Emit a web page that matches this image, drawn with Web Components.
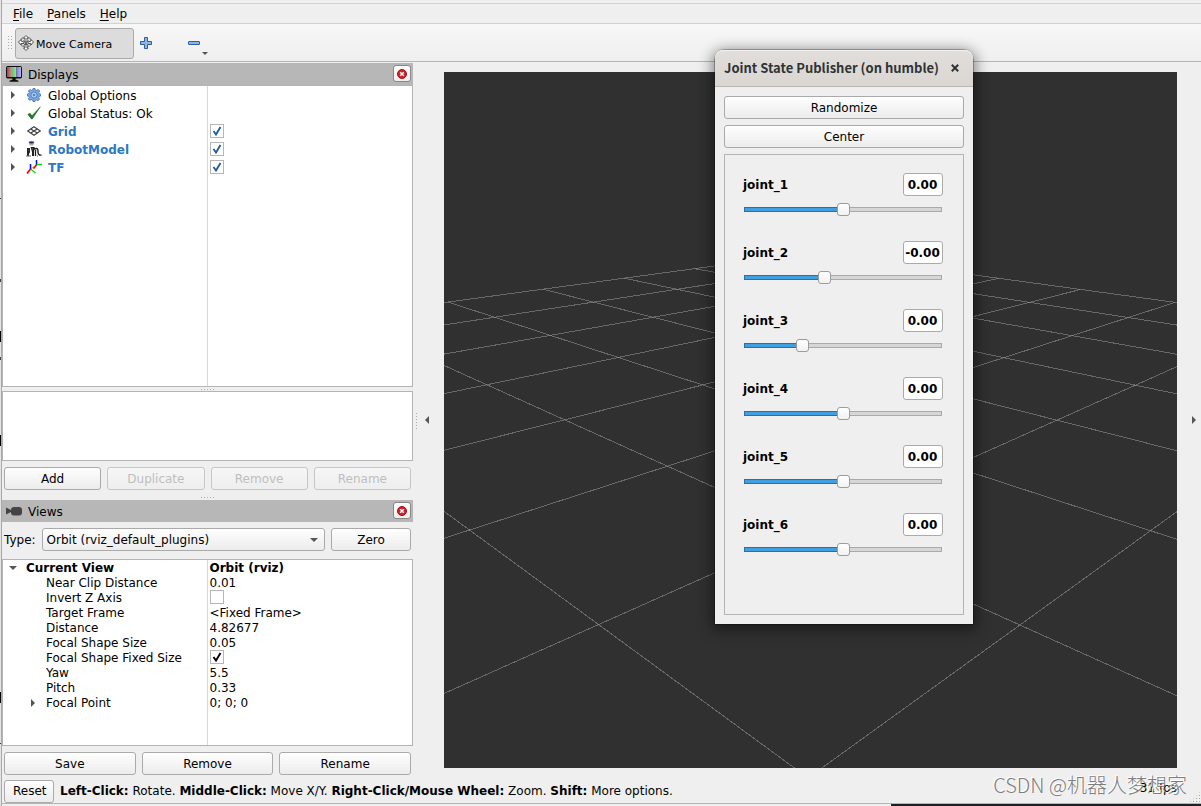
<!DOCTYPE html>
<html lang="en">
<head>
<meta charset="utf-8">
<title>RViz</title>
<style>
  html, body { margin: 0; height: 100%; }
  body { background: #efefef; font: 12px/15px "DejaVu Sans", sans-serif; color: #000; }
</style>
</head>
<body>
<rv-app></rv-app>
<script>
const BASE = `
  :host, *, *::before, *::after { box-sizing: border-box; }
  button, input, select { font: inherit; color: inherit; margin: 0; }
  svg { display: block; }
`;

function define(name, css, html, setup) {
  const template = document.createElement('template');
  template.innerHTML = `<style>${BASE}${css}</style>${html}`;
  customElements.define(name, class extends HTMLElement {
    constructor() {
      super();
      this.attachShadow({ mode: 'open' }).append(template.content.cloneNode(true));
    }
    connectedCallback() {
      if (setup && !this.ready) { this.ready = true; setup(this, this.shadowRoot); }
    }
  });
}

/* ---------- icons ---------- */
const ICONS = {
  move: [16, 16, `<g fill="#fff" stroke="#555" stroke-linejoin="round">
    <path d="M2.500 5.500 4 3h8l1.500 2.500-1 5L8 13l-4.500-2.500z" fill="none" stroke="#777"/>
    <path d="M8 .5 10.500 3H9v4h-2V3H5.500zM8 15.500 5.500 13H7V9.500h2V13h1.500zM.5 7 3 4.500V6l3 1v1.500L3 8.500V10zM15.500 7 13 4.500V6l-3 1v1.500l3 0V10z"/></g>
    <path d="M5.500 5.500l5 5M10.500 5.500l-5 5" stroke="#666"/>`],
  plus: [12, 12, `<path d="M4.500.5h3v4h4v3h-4v4h-3v-4h-4v-3h4z" fill="#8fb4dd" stroke="#2c5f9e"/>`],
  minus: [12, 4, `<rect x=".5" y=".5" width="11" height="3" rx=".5" fill="#8fb4dd" stroke="#2c5f9e"/>`],
  monitor: [16, 16, `<defs>
    <linearGradient id="r"><stop stop-color="#a4444b"/><stop offset="1" stop-color="#cf9a9c"/></linearGradient>
    <linearGradient id="g"><stop stop-color="#66c262"/><stop offset="1" stop-color="#a9dfa5"/></linearGradient>
    <linearGradient id="b"><stop stop-color="#8078dc"/><stop offset="1" stop-color="#bcb8f4"/></linearGradient></defs>
    <rect x=".5" y=".5" width="15" height="11.500" rx="1" fill="#111" stroke="#111"/>
    <rect x="1" y="1" width="5" height="10" fill="url(#r)"/><rect x="6" y="1" width="4.500" height="10" fill="url(#g)"/><rect x="10.500" y="1" width="4.500" height="10" fill="url(#b)"/>
    <path d="M6.500 12h3v1.500l3 1.300v.9h-9v-.9l3-1.300z" fill="#111"/>`],
  camera: [16, 10, `<path d="M0 1.500 5 4v2L0 8.500z" fill="#444"/><rect x="5" y="1" width="11" height="8.500" rx="3" fill="#444"/>`],
  gear: [14, 14, `<g fill="#7fa7dc" stroke="#3a6db3" stroke-width=".8"><path d="M6 .5h2l.4 1.500 1.400.5L11.200 1.500l1.500 1.500-.9 1.400.5 1.300 1.300.4v2l-1.400.4-.5 1.400.9 1.300-1.500 1.500-1.300-.9-1.400.5L8 13.500H6l-.4-1.500-1.400-.5-1.400.9-1.500-1.500.9-1.300-.5-1.400L.4 8V6l1.400-.4.5-1.300L1.400 3l1.500-1.500 1.300.9L5.600 2z"/></g>
    <circle cx="7" cy="7" r="3.200" fill="#a9c6ea" stroke="#4f82c6"/><circle cx="7" cy="7" r="1" fill="#3a6db3"/>`],
  ok: [14, 14, `<path d="M.8 8.400 3 7.200l2 2.600L13.300.8 5.300 13H4.500z" fill="#1c7d22" stroke="#146018" stroke-width=".5"/>`],
  grid: [14, 10, `<g fill="none" stroke="#444" stroke-width="1.200"><path d="M7 .7 13.300 5 7 9.300.7 5z"/><path d="M3.800 2.900 10.200 7.100M10.200 2.900 3.800 7.100"/></g>`],
  robot: [16, 16, `<ellipse cx="5.500" cy="1.500" rx="2.800" ry="1.300" fill="#24356b"/><path d="M3.500 3h4v1.500h-4z" fill="#aaa"/>
    <path d="M1 7h3v4.500l-1 1V15H1zM4.500 6h4l1 2.500-1.500.5V15H6v-4z" fill="#222"/><path d="M9 8c3-1.500 3 1 3 3s1 3.500 3.500 3M9.500 9v6" fill="none" stroke="#222" stroke-width="1.400"/><path d="M0 15h5M2 9h1M6 8h1M11 15h1" stroke="#666"/>`],
  tf: [16, 14, `<path d="M4.500 9 10.500 5" stroke="#ec0" stroke-width="1.400"/>
    <path d="M10.500 5V0M4.500 9V4" stroke="#00f" stroke-width="1.500"/><path d="M10.500 4.500H16M4.500 9l5 4" stroke="#0d0" stroke-width="1.300"/><path d="M10.500 5 7.500 8.500M4.500 9 1 13.500" stroke="#f00" stroke-width="1.700"/>`],
  close: [10, 10, `<circle cx="5" cy="5" r="4.500" fill="#d32026" stroke="#a01217"/><path d="M3.200 3.200l3.600 3.600M6.800 3.200 3.200 6.800" stroke="#fff" stroke-width="1.500"/>`],
  x: [8, 8, `<path d="M.8.8l6.400 6.400M7.200.8.8 7.200" stroke="#2e3436" stroke-width="2"/>`],
  right: [4, 8, `<path d="M0 0 4 4 0 8z" fill="#555"/>`],
  left: [4, 8, `<path d="M4 0 0 4 4 8z" fill="#555"/>`],
  down: [8, 4, `<path d="M0 0H8L4 4z" fill="#555"/>`],
  downsmall: [6, 3, `<path d="M0 0H6L3 3z" fill="#555"/>`],
};
const icon = n => {
  const [w, h, body] = ICONS[n];
  return `<svg width="${w}" height="${h}" viewBox="0 0 ${w} ${h}" aria-hidden="true">${body}</svg>`;
};

define('rv-icon', `:host { display: inline-flex; }`, ``,
  (host, root) => root.append(document.createRange().createContextualFragment(icon(host.getAttribute('name')))));

/* ---------- button ---------- */
define('rv-button', `
  :host { display: block; min-width: 0; }
  button { display: block; width: 100%; height: 23px; padding: 1px 8px 0; border: 1px solid #aaa; border-radius: 3px;
    background: linear-gradient(#fefefe, #ececec); line-height: 15px; }
  button:disabled { color: #bebebe; border-color: #c6c6c6; background: linear-gradient(#f6f6f6, #eee); }
`, `<button type="button"><slot></slot></button>`,
  (host, root) => { root.querySelector('button').disabled = host.hasAttribute('disabled'); });

/* ---------- dotted drag handle ---------- */
define('rv-handle', `
  :host { display: block; width: 16px; height: 2px; background: radial-gradient(circle, #aaa 1px, transparent 1px) 0 0 / 3px 3px; }
  :host([vertical]) { width: 2px; height: 17px; }
  :host([wide]) { width: 5px; height: 16px; }
  :host([corner]) { width: 12px; height: 12px; clip-path: polygon(100% 0, 100% 100%, 0 100%); }
`, ``);

/* ---------- menu bar ---------- */
define('rv-menu-bar', `
  :host { display: flex; flex: none; height: 21px; padding: 1px 0 0 5px; border-top: 1px solid #d4d4d4; border-bottom: 1px solid #d2d2d2; background: #efefef; }
  button { border: 0; background: none; padding: 0 6px; }
  button + button { margin-left: 2px; }
  u { text-underline-offset: 2px; }
`, `<button type="button"><u>F</u>ile</button><button type="button"><u>P</u>anels</button><button type="button"><u>H</u>elp</button>`);

/* ---------- tool bar ---------- */
define('rv-tool-bar', `
  :host { display: flex; flex: none; align-items: center; height: 38px; padding: 1px 0 0 5px; background: linear-gradient(#f7f7f7, #efefef); border-bottom: 1px solid #b4b4b4; }
  button { display: flex; align-items: center; border: 0; background: none; padding: 0; }
  .camera { width: 119px; height: 31px; margin-left: 3px; padding: 0 2px; gap: 2px; font-size: 11px; border: 1px solid #aaa; border-radius: 3px; background: #dcdcdc; }
  .camera span { padding-top: 2px; }
  .add { margin-left: 6px; }
  .remove { position: relative; margin-left: 36px; height: 30px; }
  .remove rv-icon + rv-icon { position: absolute; left: 14px; bottom: 3px; }
`, `<rv-handle wide></rv-handle>
  <button type="button" class="camera"><rv-icon name="move"></rv-icon><span>Move Camera</span></button>
  <button type="button" class="add" aria-label="Add tool"><rv-icon name="plus"></rv-icon></button>
  <button type="button" class="remove" aria-label="Remove tool"><rv-icon name="minus"></rv-icon><rv-icon name="downsmall"></rv-icon></button>`);

/* ---------- docked panel ---------- */
define('rv-panel', `
  :host { display: flex; flex-direction: column; }
  header { display: flex; align-items: center; flex: none; height: 22px; padding: 0 2px 0 4px; gap: 6px; background: #b7b7b7; }
  h2 { flex: 1; margin: 0; font: inherit; padding-top: 2px; }
  button { display: flex; align-items: center; justify-content: center; width: 18px; height: 17px; margin-bottom: 1px; padding: 0;
    border: 1px solid #888; border-radius: 3px; background: linear-gradient(#fff, #eee); }
`, `<header><span class="icon"></span><h2></h2><button type="button" aria-label="Close"><rv-icon name="close"></rv-icon></button></header><slot></slot>`,
  (host, root) => {
    root.querySelector('h2').textContent = host.getAttribute('heading');
    root.querySelector('.icon').innerHTML = icon(host.getAttribute('icon'));
  });

/* ---------- property tree ---------- */
const TREES = {
  displays: [
    { name: 'Global Options', icon: 'gear', arrow: 'right' },
    { name: 'Global Status: Ok', icon: 'ok', arrow: 'right' },
    { name: 'Grid', icon: 'grid', arrow: 'right', check: true, kind: 'on' },
    { name: 'RobotModel', icon: 'robot', arrow: 'right', check: true, kind: 'on' },
    { name: 'TF', icon: 'tf', arrow: 'right', check: true, kind: 'on' },
  ],
  views: [
    { name: 'Current View', arrow: 'down', value: 'Orbit (rviz)', kind: 'top' },
    { name: 'Near Clip Distance', value: '0.01' },
    { name: 'Invert Z Axis', check: false },
    { name: 'Target Frame', value: '&lt;Fixed Frame&gt;' },
    { name: 'Distance', value: '4.82677' },
    { name: 'Focal Shape Size', value: '0.05' },
    { name: 'Focal Shape Fixed Size', check: true },
    { name: 'Yaw', value: '5.5' },
    { name: 'Pitch', value: '0.33' },
    { name: 'Focal Point', arrow: 'right', value: '0; 0; 0' },
  ],
};
define('rv-tree', `
  :host { display: block; border: 1px solid #b4b4b4;
    background: linear-gradient(#d8d8d8, #d8d8d8) 50% 0 / 1px 100% no-repeat #fff; }
  table { width: 100%; table-layout: fixed; border-collapse: collapse; }
  td { width: 50%; height: 15px; padding: 0; line-height: 15px; white-space: nowrap; vertical-align: top; }
  td + td { padding-left: 2px; }
  .cell { display: flex; align-items: center; height: 100%; }
  .text { display: block; margin: 1px 0 -1px; }
  .arrow { display: flex; justify-content: center; width: 8px; margin-left: 26px; margin-right: 9px; }
  .top .arrow { margin-left: 6px; }
  .top, .on { font-weight: bold; }
  .on label { color: #2a78c6; }
  :host([data="displays"]) td { height: 18px; line-height: 18px; vertical-align: middle; }
  :host([data="displays"]) .arrow { margin-left: 6px; }
  .icon { display: flex; justify-content: center; width: 16px; margin-right: 6px; }
  input { display: block; appearance: none; width: 14px; height: 14px; border: 1px solid #b6b6b6; background: #fff; }
  input:checked { background: var(--tick) center / 10px 10px no-repeat #fff; }
  :host { --tick: url('data:image/svg+xml,<svg xmlns="http://www.w3.org/2000/svg" viewBox="0 0 10 10"><path d="M1.500 5 4 8.500 8.500 1" fill="none" stroke="black" stroke-width="1.900"/></svg>'); }
  :host([data="displays"]) { --tick: url('data:image/svg+xml,<svg xmlns="http://www.w3.org/2000/svg" viewBox="0 0 10 10"><path d="M1.500 5 4 8.500 8.500 1" fill="none" stroke="rgb(35,96,160)" stroke-width="1.900"/></svg>'); }
`, `<table><tbody></tbody></table>`,
  (host, root) => {
    root.querySelector('tbody').innerHTML = TREES[host.getAttribute('data')].map((r, i) => `
      <tr class="${r.kind || ''}">
        <td><div class="cell"><span class="arrow">${r.arrow ? icon(r.arrow) : ''}</span>${
          r.icon ? `<span class="icon">${icon(r.icon)}</span>` : ''}${
          'check' in r ? `<label class="text" for="c${i}">${r.name}</label>` : `<span class="text">${r.name}</span>`}</div></td>
        <td>${'check' in r ? `<input type="checkbox" id="c${i}"${r.check ? ' checked' : ''}>` : `<span class="text">${r.value || ''}</span>`}</td>
      </tr>`).join('');
  });

/* ---------- view type row ---------- */
define('rv-view-type', `
  :host { display: flex; align-items: center; gap: 6px; padding: 6px 2px 8px; }
  label { padding-top: 1px; }
  .field { position: relative; flex: 1; }
  select { display: block; appearance: none; width: 100%; height: 23px; padding: 1px 20px 0 4px; border: 1px solid #aaa; border-radius: 3px;
    background: linear-gradient(#fefefe, #ececec); }
  .field rv-icon { position: absolute; right: 7px; top: 10px; pointer-events: none; }
  rv-button { width: 80px; }
`, `<label for="type">Type:</label>
  <div class="field"><select id="type"><option>Orbit (rviz_default_plugins)</option></select><rv-icon name="down"></rv-icon></div>
  <rv-button>Zero</rv-button>`);

/* ---------- row of equal buttons ---------- */
define('rv-button-row', `
  :host { display: flex; gap: 6px; padding: 6px 2px 1px; }
  ::slotted(*) { flex: 1; }
`, `<slot></slot>`);

/* ---------- 3D view: a 10 x 10 ground grid seen by an orbit camera ---------- */
define('rv-scene', `
  :host { display: block; min-width: 0; min-height: 0; overflow: hidden; background: #303030; }
  svg { width: 100%; height: 100%; }
`, `<svg viewBox="0 0 733 696" preserveAspectRatio="xMidYMid slice" role="img" aria-label="3D view">
  <g stroke="rgb(160,160,164)" stroke-opacity=".5" shape-rendering="crispEdges"></g></svg>`,
  (host, root) => {
    const dist = 4.82677, yaw = 5.5, pitch = 0.33, cx = 366.5, cy = 348;
    const f = cy / Math.tan(Math.PI / 8), near = 0.3;
    const view = (x, y) => {
      const s = -(x * Math.cos(yaw) + y * Math.sin(yaw));
      const t = x * -Math.sin(yaw) + y * Math.cos(yaw);
      return [t, s * Math.sin(pitch), dist + s * Math.cos(pitch)];
    };
    const line = (a, b) => {
      if (a[2] < near && b[2] < near) return '';
      if (a[2] > b[2]) [a, b] = [b, a];
      if (a[2] < near) {
        const k = (near - a[2]) / (b[2] - a[2]);
        a = a.map((v, i) => v + (b[i] - v) * k);
      }
      const [p, q] = [a, b].map(v => [cx + f * v[0] / v[2], cy - f * v[1] / v[2]].map(n => n.toFixed(1)));
      return `<line x1="${p[0]}" y1="${p[1]}" x2="${q[0]}" y2="${q[1]}"/>`;
    };
    let out = '';
    for (let i = -5; i <= 5; i++) out += line(view(i, -5), view(i, 5)) + line(view(-5, i), view(5, i));
    root.querySelector('g').innerHTML = out;
  });

/* ---------- status bar ---------- */
define('rv-status', `
  :host { display: flex; align-items: center; gap: 6px; height: 28px; padding: 3px 0 0 2px; }
  rv-button { width: 50px; }
  p { margin: 0; flex: 1; }
  .fps { margin-right: 24px; padding-bottom: 6px; }
  rv-handle { position: absolute; right: 0; bottom: 3px; }
`, `<rv-button>Reset</rv-button>
  <p><b>Left-Click:</b> Rotate. <b>Middle-Click:</b> Move X/Y. <b>Right-Click/Mouse Wheel:</b> Zoom. <b>Shift:</b> More options.</p>
  <span class="fps">31 fps</span><rv-handle corner></rv-handle>`);

/* ---------- joint slider ---------- */
define('rv-joint', `
  :host { display: grid; grid-template-columns: 1fr 40px; align-items: center; row-gap: 7px; font-weight: bold; }
  label { padding-top: 2px; }
  [type=text] { width: 40px; height: 23px; padding: 0 1px 0 0; text-align: center; border: 1px solid #aaa; border-radius: 3px; background: #fff; }
  [type=range] { grid-column: 1 / -1; justify-self: stretch; appearance: none; height: 13px; margin: 0 1px; background: none; }
  [type=range]::-webkit-slider-runnable-track { height: 5px; border: 1px solid #aaa; border-radius: 2px;
    background: linear-gradient(90deg, #419fe0 var(--fill), #d6d6d6 var(--fill)) border-box;
    border-image: linear-gradient(90deg, #2a6fa5 var(--fill), #aaa var(--fill)) 1; }
  [type=range]::-webkit-slider-thumb { appearance: none; width: 13px; height: 13px; margin-top: -5px; border: 1px solid #9c9c9c; border-radius: 3px; background: linear-gradient(#fff, #f2f2f2); }
`, `<label for="value"></label><input type="text" id="value"><input type="range" min="0" max="1000">`,
  (host, root) => {
    const [text, range] = root.querySelectorAll('input');
    const name = host.getAttribute('name');
    root.querySelector('label').textContent = name;
    text.value = host.getAttribute('value');
    range.value = host.getAttribute('position');
    range.setAttribute('aria-label', name + ' position');
    const fill = () => range.style.setProperty('--fill', range.value / 10 + '%');
    range.addEventListener('input', fill);
    fill();
  });

/* ---------- floating window ---------- */
define('rv-window', `
  :host { display: block; width: 258px; border-radius: 9px 9px 0 0; background: #efefef;
    box-shadow: 0 0 0 1px rgba(0,0,0,.25), 0 3px 14px 3px rgba(0,0,0,.45); }
  header { display: flex; align-items: center; gap: 9px; height: 37px; padding: 0 14px 0 9px; border-bottom: 1px solid #beb6ae; border-radius: 8px 8px 0 0;
    background: linear-gradient(#e1dedb, #dad6d2); box-shadow: inset 0 1px #f4f2f1; }
  h1 { margin: 0; flex: 1; min-width: 0; font: 700 13px/20px "Noto Sans CJK SC", "Noto Sans", sans-serif; color: #2e3436; white-space: nowrap; }
  button { display: flex; padding: 0; border: 0; background: none; }
  .body { display: flex; flex-direction: column; gap: 6px; padding: 9px; }
`, `<header><h1></h1><button type="button" aria-label="Close"><rv-icon name="x"></rv-icon></button></header><div class="body"><slot></slot></div>`,
  (host, root) => { root.querySelector('h1').textContent = host.getAttribute('heading'); });

define('rv-joint-list', `
  :host { display: flex; flex-direction: column; gap: 25px; padding: 18px 20px 58px 18px; border: 1px solid #b4b4b4; }
`, `<slot></slot>`);

/* ---------- application ---------- */
define('rv-app', `
  :host { display: flex; flex-direction: column; position: relative; height: 100vh; min-height: 700px; padding: 3px 0 2px 2px; overflow: hidden; background: #efefef; }
  /* sliver of the window behind, then this window's own border */
  .behind { position: absolute; left: 0; top: 0; bottom: 0; width: 2px; border-right: 1px solid #a8a8a8;
    background: linear-gradient(#e4e4e4 198px, #333 198px 199px, #e4e4e4 199px 279px, #444 279px 282px, #e4e4e4 282px 331px, #000 331px 342px, #e4e4e4 342px 357px,
      #444 357px 360px, #e4e4e4 360px 435px, #000 435px 446px, #e4e4e4 446px 692px, #000 692px 703px, #e4e4e4 703px 743px, #333 743px 744px, #e4e4e4 744px); }
  main { flex: 1; min-height: 0; display: grid; grid-template-columns: 411px 31px minmax(0, 1fr) 24px; }
  .docks { display: flex; flex-direction: column; min-height: 0; padding-top: 1px; }
  .displays { flex: 1; min-height: 0; }
  .displays rv-tree { flex: 1; }
  .grip { flex: none; margin: 1px auto; }
  .low { margin: 5px auto 2px; }
  .help { height: 70px; border: 1px solid #b4b4b4; background: #fff; }
  .views rv-tree { padding-bottom: 35px; }
  .side { display: flex; align-items: center; gap: 8px; padding: 2px 0 0 2px; border: 0; background: none; }
  .right { padding-left: 15px; }
  rv-scene { margin: 10px 0 8px; }
  rv-status { flex: none; border-bottom: 1px solid #b4b4b4; }
  rv-window { position: absolute; left: 715px; top: 50px; }
  .mark { position: absolute; right: 14px; bottom: 9px; font: 20px/24px "Noto Sans CJK SC", sans-serif; font-weight: 300; color: rgba(110,110,110,.9); text-shadow: -1px -1px #fff; white-space: nowrap; }
  .edge { position: absolute; left: 891px; right: 0; bottom: 0; height: 2px; background: #1c1f26; }
`, `
  <div class="behind"></div>
  <rv-menu-bar></rv-menu-bar>
  <rv-tool-bar></rv-tool-bar>
  <main>
    <div class="docks">
      <rv-panel class="displays" heading="Displays" icon="monitor">
        <rv-tree data="displays"></rv-tree>
        <rv-handle class="grip"></rv-handle>
        <div class="help"></div>
        <rv-button-row>
          <rv-button>Add</rv-button><rv-button disabled>Duplicate</rv-button><rv-button disabled>Remove</rv-button><rv-button disabled>Rename</rv-button>
        </rv-button-row>
      </rv-panel>
      <rv-handle class="grip low"></rv-handle>
      <rv-panel class="views" heading="Views" icon="camera">
        <rv-view-type></rv-view-type>
        <rv-tree data="views"></rv-tree>
        <rv-button-row>
          <rv-button>Save</rv-button><rv-button>Remove</rv-button><rv-button>Rename</rv-button>
        </rv-button-row>
      </rv-panel>
    </div>
    <button type="button" class="side" aria-label="Hide left docks"><rv-handle vertical></rv-handle><rv-icon name="left"></rv-icon></button>
    <rv-scene></rv-scene>
    <button type="button" class="side right" aria-label="Hide right docks"><rv-icon name="right"></rv-icon></button>
  </main>
  <rv-status></rv-status>
  <div class="edge"></div>
  <rv-window heading="Joint State Publisher (on humble)">
    <rv-button>Randomize</rv-button>
    <rv-button>Center</rv-button>
    <rv-joint-list>
      <rv-joint name="joint_1" value="0.00" position="500"></rv-joint>
      <rv-joint name="joint_2" value="-0.00" position="400"></rv-joint>
      <rv-joint name="joint_3" value="0.00" position="281"></rv-joint>
      <rv-joint name="joint_4" value="0.00" position="500"></rv-joint>
      <rv-joint name="joint_5" value="0.00" position="500"></rv-joint>
      <rv-joint name="joint_6" value="0.00" position="500"></rv-joint>
    </rv-joint-list>
  </rv-window>
  <div class="mark">CSDN @机器人梦想家</div>
`);
</script>
</body>
</html>
